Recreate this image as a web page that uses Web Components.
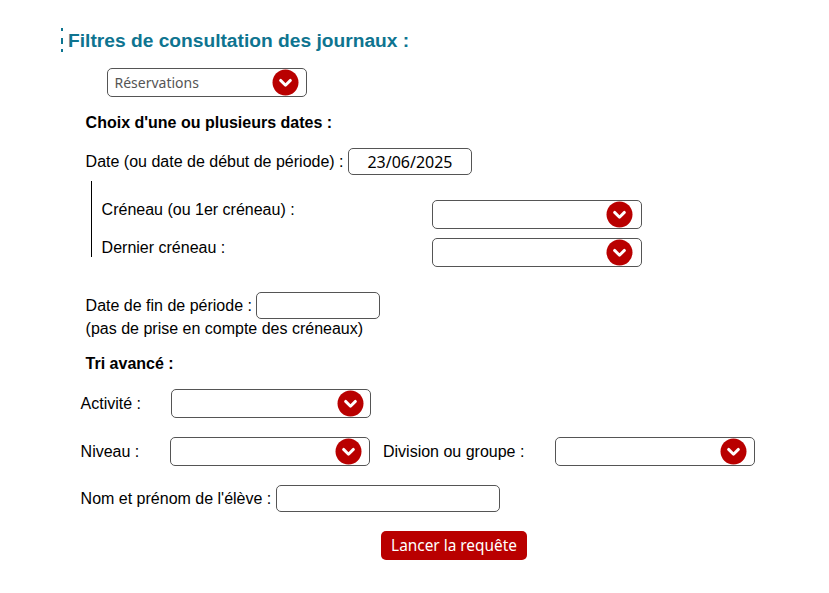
<!DOCTYPE html>
<html lang="fr">
<head>
<meta charset="utf-8">
<title>Filtres</title>
<style>
    html, body { margin: 0; background: #fff; }
    body { font: 16px/18px "Liberation Sans", Arial, sans-serif; color: #000; }
</style>
</head>
<body>
<journal-filters></journal-filters>

<script>
    const INPUT_FONT = '"Noto Sans", "Open Sans", sans-serif';

    class FilterSelect extends HTMLElement {
        connectedCallback() {
            const shadow = this.attachShadow({ mode: 'open' });
            shadow.innerHTML = `
                <style>
                    :host {
                        display: flex;
                        align-items: center;
                        box-sizing: border-box;
                        flex: none;
                        width: var(--w, 200px);
                        height: 29px;
                        padding: 0 var(--pr, 7px) 0 6.5px;
                        background: #fff;
                        border: 1px solid #555;
                        border-radius: 5px;
                        font: 14px ${INPUT_FONT};
                        color: #555;
                    }
                    span { flex: 1; white-space: nowrap; }
                    svg { display: block; flex: none; }
                </style>
                <span><slot></slot></span>
                <svg width="27" height="27" viewBox="0 0 27 27" aria-hidden="true">
                    <circle cx="13.5" cy="13.5" r="13" fill="#b90000"/>
                    <path d="M8.6 11.4 13.5 16.2 18.4 11.4" fill="none" stroke="#fff" stroke-width="2.9" stroke-linecap="round" stroke-linejoin="round"/>
                </svg>`;
        }
    }

    class FilterInput extends HTMLElement {
        connectedCallback() {
            const shadow = this.attachShadow({ mode: 'open' });
            shadow.innerHTML = `
                <style>
                    :host {
                        display: flex;
                        align-items: center;
                        justify-content: center;
                        box-sizing: border-box;
                        flex: none;
                        width: var(--w, 124px);
                        height: 27px;
                        background: #fff;
                        border: 1px solid #555;
                        border-radius: 5px;
                        font: 16px ${INPUT_FONT};
                        color: #000;
                    }
                </style>
                <slot></slot>`;
        }
    }

    class FilterButton extends HTMLElement {
        connectedCallback() {
            const shadow = this.attachShadow({ mode: 'open' });
            shadow.innerHTML = `
                <style>
                    :host {
                        display: flex;
                        align-items: center;
                        justify-content: center;
                        box-sizing: border-box;
                        width: 146px;
                        height: 29px;
                        background: #b90000;
                        border-radius: 5px;
                        font: 15.4px ${INPUT_FONT};
                        color: #fff;
                    }
                </style>
                <slot></slot>`;
        }
    }

    class JournalFilters extends HTMLElement {
        connectedCallback() {
            const shadow = this.attachShadow({ mode: 'open' });
            shadow.innerHTML = `
                <style>
                    :host { display: block; padding: 28px 0 0 61px; }
                    h2 {
                        margin: 0;
                        height: 24px;
                        padding-left: 7px;
                        /* three short dashes, a plain dashed border came out too dense */
                        background: linear-gradient(#0e7490 0 3px, transparent 3px 9.5px, #0e7490 9.5px 16px, transparent 16px 21px, #0e7490 21px) left top / 2px 24px no-repeat;
                        font: bold 19.2px/26px "Liberation Sans", Arial, sans-serif;
                        color: #0e7490;
                    }
                    .row { display: flex; align-items: center; }
                    .top { margin: 16px 0 0 46px; }
                    h3 { margin: 0 0 0 24.6px; font: bold 16px/18px "Liberation Sans", Arial, sans-serif; }
                    .choice { margin-top: 17px; }
                    .date { margin: 16px 0 0 24.6px; gap: 4.4px; }
                    .slots {
                        margin: 6px 0 0 30px;
                        height: 76px;
                        border-left: 1px solid #000;
                        padding: 19px 0 0 9.6px;
                        box-sizing: border-box;
                    }
                    .slot { display: grid; grid-template-columns: 330.4px 210px; height: 29px; }
                    .slot + .slot { margin-top: 9px; }
                    .slot span { line-height: 18px; padding-top: 1px; }
                    .slot filter-select { --w: 210px; --pr: 8px; }
                    .end { margin: 35px 0 0 24.6px; gap: 4.4px; }
                    .note { margin: 1px 0 0 24.6px; line-height: 18px; }
                    .sort { margin-top: 17px; }
                    .line { margin-left: 19.6px; }
                    .act { margin-top: 16px; }
                    .act span { width: 90.4px; }
                    .act filter-select { --pr: 6px; }
                    .lvl { margin-top: 19px; }
                    .lvl .a { width: 89.4px; }
                    .lvl .b { width: 172px; margin-left: 13px; }
                    .name { margin-top: 19px; gap: 4.4px; }
                    .name filter-input { --w: 224px; }
                    .send { margin: 19px 0 0 320px; }
                </style>
                <h2>Filtres de consultation des journaux :</h2>
                <div class="row top"><filter-select>Réservations</filter-select></div>
                <h3 class="choice">Choix d'une ou plusieurs dates :</h3>
                <div class="row date"><span>Date (ou date de début de période) :</span><filter-input>23/06/2025</filter-input></div>
                <div class="slots">
                    <div class="slot"><span>Créneau (ou 1er créneau) :</span><filter-select></filter-select></div>
                    <div class="slot"><span>Dernier créneau :</span><filter-select></filter-select></div>
                </div>
                <div class="row end"><span>Date de fin de période :</span><filter-input></filter-input></div>
                <div class="note">(pas de prise en compte des créneaux)</div>
                <h3 class="sort">Tri avancé :</h3>
                <div class="row line act"><span>Activité :</span><filter-select></filter-select></div>
                <div class="row line lvl"><span class="a">Niveau :</span><filter-select></filter-select><span class="b">Division ou groupe :</span><filter-select></filter-select></div>
                <div class="row line name"><span>Nom et prénom de l'élève :</span><filter-input></filter-input></div>
                <filter-button class="send">Lancer la requête</filter-button>`;
        }
    }

    customElements.define('filter-select', FilterSelect);
    customElements.define('filter-input', FilterInput);
    customElements.define('filter-button', FilterButton);
    customElements.define('journal-filters', JournalFilters);
</script>
</body>
</html>
